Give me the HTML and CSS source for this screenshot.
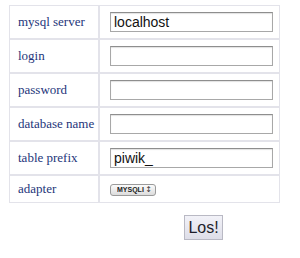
FILE: index.html
```html
<!DOCTYPE html>
<html>
    <head>
        <link rel="stylesheet" href="styles.css">
    </head>
    <body>
        <form class="setup">
            <table class="db">
                <colgroup>
                    <col class="c-label">
                    <col class="c-field">
                </colgroup>
                <tr>
                    <td class="label">mysql server</td>
                    <td class="field"><input type="text" value="localhost"></td>
                </tr>
                <tr>
                    <td class="label">login</td>
                    <td class="field"><input type="text"></td>
                </tr>
                <tr>
                    <td class="label">password</td>
                    <td class="field"><input type="password"></td>
                </tr>
                <tr>
                    <td class="label">database name</td>
                    <td class="field"><input type="text"></td>
                </tr>
                <tr>
                    <td class="label">table prefix</td>
                    <td class="field"><input type="text" value="piwik_"></td>
                </tr>
                <tr class="small">
                    <td class="label">adapter</td>
                    <td class="field">
                        <span class="pick">
                            <select>
                                <option>MYSQLI</option>
                                <option>PDO_MYSQL</option>
                            </select>
                        </span>
                    </td>
                </tr>
            </table>
            <div class="submit">
                <button type="button">Los!</button>
            </div>
        </form>
    </body>
</html>
```

FILE: styles.css
```css
body {
    margin: 0;
    background-color: white;
}
.setup {
    padding: 5px 0 0 9px;
}
table.db {
    width: 271px;
    table-layout: fixed;
    border-collapse: separate;
    border-spacing: 0;
}
col.c-label {
    width: 90px;
}
col.c-field {
    width: 181px;
}
td {
    border: 1px solid #e3e3ea;
    padding: 6px 0;
}
td.label {
    padding-left: 8px;
    padding-right: 0;
    font-family: "Liberation Serif", serif;
    font-size: 13px;
    line-height: 20px;
    color: #24357a;
    white-space: nowrap;
    overflow: hidden;
}
td.field {
    padding-left: 10px;
    padding-right: 6px;
}
tr.small td {
    padding-top: 3px;
    padding-bottom: 3px;
}
input {
    display: block;
    box-sizing: border-box;
    width: 163px;
    height: 20px;
    margin: 0;
    padding: 0 3px;
    border: 1px solid #a8a8a8;
    border-top-color: #8e8e8e;
    box-shadow: inset 0 1px 1px rgba(0, 0, 0, 0.12);
    font-family: "Liberation Sans", sans-serif;
    font-size: 14px;
    color: #111;
    background: white;
}
.pick {
    position: relative;
    display: inline-block;
    vertical-align: middle;
}
.pick select {
    -webkit-appearance: none;
    appearance: none;
    display: block;
    width: 46px;
    height: 12px;
    margin: 0;
    padding: 0 0 0 6px;
    border: 1px solid #9a9a9a;
    border-radius: 3px;
    background: linear-gradient(#fbfbfb, #dcdcdc);
    font-family: "Liberation Sans", sans-serif;
    font-size: 7px;
    font-weight: bold;
    line-height: 10px;
    color: #222;
}
.pick::after {
    content: "\2195";
    position: absolute;
    right: 4px;
    top: 0;
    font-family: "DejaVu Sans", sans-serif;
    font-size: 8px;
    line-height: 12px;
    color: #333;
    pointer-events: none;
}
.submit {
    padding: 12px 0 0 175px;
}
button {
    display: block;
    box-sizing: border-box;
    width: 39px;
    height: 25px;
    padding: 0;
    border: 1px solid #b9b9c4;
    background: linear-gradient(#f2f2f8, #dedee8);
    font-family: "Liberation Sans", sans-serif;
    font-size: 16px;
    color: #1e1e2a;
}
```
